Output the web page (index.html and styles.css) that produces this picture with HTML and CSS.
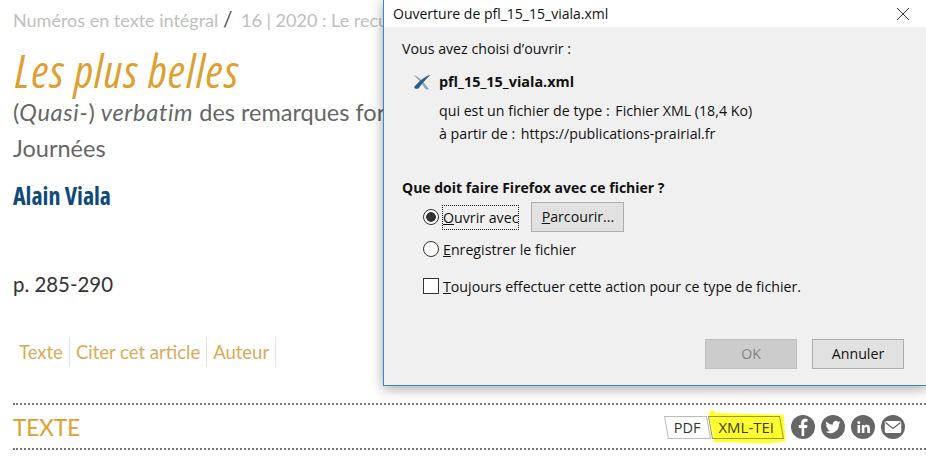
FILE: index.html
```html
<!DOCTYPE html>
<html lang="fr">
  <head>
    <meta charset="UTF-8" />
    <meta name="viewport" content="width=device-width, initial-scale=1.0" />
    <title>Les plus belles</title>
    <link rel="stylesheet" href="styles.css">
  </head>
  <body>
    <div class="page">
      <p class="crumbs">Numéros en texte intégral <span class="sep">/</span> 16 | 2020 : Le recueil</p>
      <h1 class="title">Les plus belles</h1>
      <p class="subtitle">(<em>Quasi-</em>) <em>verbatim</em> des remarques formulées lors des<br>Journées</p>
      <p class="author">Alain Viala</p>
      <p class="pages">p. 285-290</p>
      <ul class="tabs">
        <li>Texte</li>
        <li>Citer cet article</li>
        <li>Auteur</li>
      </ul>
      <div class="section-bar">
        <h2 class="section-title">TEXTE</h2>
        <div class="tools">
          <span class="tag">PDF</span>
          <span class="tag tag-marked">
            <svg class="marker" viewBox="0 0 76 34" preserveAspectRatio="none"><path d="M1 4C2 0 6 0 8 3c20 1 45 1 66 2l2 26c-10 2-22 3-34 2-12 0-27-1-36-1L1 4z"/></svg>
            XML-TEI
          </span>
          <svg class="social" viewBox="0 0 24 24"><circle cx="12" cy="12" r="12"/><path class="glyph" d="M13.200 21v-8h2.800l.4-3.100h-3.200V8.200c0-.9.3-1.500 1.500-1.500h1.800V3.900c-.4 0-1.300-.1-2.400-.1-2.400 0-4 1.400-4 4.100v2H7.800V13h2.800v8z"/></svg>
          <svg class="social" viewBox="0 0 24 24"><circle cx="12" cy="12" r="12"/><path class="glyph" d="M19.500 7.300c-.6.300-1.200.4-1.800.5.600-.4 1.100-1 1.400-1.700-.6.400-1.300.6-2 .8a3.100 3.100 0 0 0-5.300 2.800C9.200 9.600 6.900 8.400 5.400 6.500c-.8 1.400-.4 3.200 1 4.100-.5 0-1-.1-1.400-.4 0 1.500 1.100 2.800 2.500 3.100-.5.100-.9.100-1.400 0 .4 1.200 1.500 2.100 2.900 2.200A6.300 6.300 0 0 1 4.500 16.800a8.800 8.800 0 0 0 13.500-7.800c.6-.4 1.100-1 1.500-1.700z"/></svg>
          <svg class="social" viewBox="0 0 24 24"><circle cx="12" cy="12" r="12"/><path class="glyph" d="M6.500 10h2.600v8H6.500zM7.800 6a1.500 1.500 0 1 1 0 3 1.500 1.500 0 0 1 0-3zM10.800 10h2.500v1.100c.4-.7 1.300-1.300 2.500-1.300 2.600 0 3.100 1.700 3.100 3.900V18h-2.600v-3.800c0-1 0-2.200-1.300-2.200s-1.600 1-1.600 2.100V18h-2.600z"/></svg>
          <svg class="social" viewBox="0 0 24 24"><circle cx="12" cy="12" r="12"/><rect class="glyph" x="3.800" y="6" width="16.400" height="12" rx="1.500"/><path class="flap" d="M4.500 7.500l7.500 6 7.500-6"/></svg>
        </div>
      </div>
    </div>

    <div class="dialog">
      <div class="dialog-title">
        <span>Ouverture de pfl_15_15_viala.xml</span>
        <svg class="close" viewBox="0 0 14 14"><path d="M1 1l12 12M13 1L1 13"/></svg>
      </div>
      <div class="dialog-body">
        <p class="intro">Vous avez choisi d’ouvrir :</p>
        <div class="file">
          <svg class="file-icon" viewBox="0 0 18 16"><path class="x-back" d="M1 1.500C5 2 9 6 16 15c-2 1-3 .5-4-.5C9 10 6 6 1 1.500z"/><path class="x-front" d="M17.500 1C15 1 9 4 1 13c1 2 3 2.500 5 1 2-3 7-9 11.500-13z"/></svg>
          <span>pfl_15_15_viala.xml</span>
        </div>
        <p class="file-meta">qui est un fichier de type : <span class="meta-value">Fichier XML (18,4 Ko)</span></p>
        <p class="file-meta file-from">à partir de : <span class="meta-value">https://publications-prairial.fr</span></p>
        <p class="question">Que doit faire Firefox avec ce fichier ?</p>
        <div class="options">
          <div class="option option-open">
            <span class="radio radio-on"></span>
            <span class="focused"><u>O</u>uvrir avec</span>
            <span class="btn btn-browse"><u>P</u>arcourir...</span>
          </div>
          <div class="option option-save">
            <span class="radio"></span>
            <span><u>E</u>nregistrer le fichier</span>
          </div>
          <div class="option option-always">
            <span class="check"></span>
            <span><u>T</u>oujours effectuer cette action pour ce type de fichier.</span>
          </div>
        </div>
        <div class="actions">
          <span class="btn btn-off">OK</span>
          <span class="btn">Annuler</span>
        </div>
      </div>
    </div>
  </body>
</html>
```

FILE: styles.css
```css
html, body {
  margin: 0;
  height: 463px;
  overflow: hidden;
  background: #fff;
}
body {
  position: relative;
  font-family: Lato, "Open Sans", sans-serif;
}
p, h1, h2, ul {
  margin: 0;
  padding: 0;
}
.page {
  padding: 9px 0 0 13px;
  white-space: nowrap;
}
.crumbs {
  width: 370px;
  overflow: hidden;
  font-size: 18px;
  line-height: 20px;
  color: #c0c0c0;
}
.sep {
  margin-right: 4px;
  color: #555;
  font-size: 21px;
}
.title {
  margin-top: 18px;
  font-family: "Open Sans", sans-serif;
  font-size: 45px;
  line-height: 46px;
  font-weight: 400;
  font-stretch: 75%;
  font-style: italic;
  letter-spacing: 1.400px;
  color: #dfa032;
  padding-left: 2px;
}
.subtitle {
  width: 370px;
  overflow: hidden;
  font-size: 23.500px;
  line-height: 36px;
  color: #666;
}
.subtitle em {
  letter-spacing: 0.7px;
}
.author {
  margin-top: 16px;
  font-family: "Open Sans", sans-serif;
  font-size: 24px;
  line-height: 28px;
  font-weight: 700;
  font-stretch: 75%;
  color: #0f4a7c;
}
.pages {
  margin-top: 61px;
  font-size: 20.400px;
  line-height: 26px;
  color: #333;
}
.tabs {
  display: flex;
  margin-top: 40px;
  list-style: none;
  font-size: 18.500px;
  line-height: 30px;
  color: #d9ab57;
}
.tabs li {
  padding: 0 6px;
  border-right: 1px solid #e3e3e3;
}
.section-bar {
  display: flex;
  justify-content: space-between;
  align-items: center;
  height: 42px;
  padding-top: 1px;
  margin-top: 36px;
  border-top: 2px dotted #777;
  border-bottom: 2px dotted #777;
}
.section-title {
  font-size: 22.500px;
  font-weight: 400;
  color: #dfa032;
}
.tools {
  display: flex;
  align-items: center;
  gap: 6px;
  padding-right: 21px;
}
.tag {
  position: relative;
  z-index: 0;
  padding: 0 8px;
  font-family: "Open Sans", sans-serif;
  font-size: 14.500px;
  line-height: 23px;
  color: #333;
}
.tag::before {
  content: "";
  position: absolute;
  inset: 0;
  z-index: -1;
  border: 1px solid #bbb;
  transform: skewX(10deg);
}
.tag-marked {
  margin-left: -4px;
  margin-right: 3px;
  font-size: 15px;
  color: #3a3a10;
}
.tag-marked::before {
  border-color: #9a9a30;
}
.marker {
  position: absolute;
  left: -2px;
  right: -4px;
  top: -6px;
  z-index: -2;
  width: calc(100% + 6px);
  height: 34px;
  fill: #ffff2e;
}
.social {
  width: 24px;
  height: 24px;
  fill: #666;
}
.social .glyph {
  fill: #fff;
}
.social .flap {
  fill: none;
  stroke: #666;
  stroke-width: 1.300;
}
.dialog {
  position: absolute;
  top: -1px;
  left: 383px;
  right: -1px;
  height: 385px;
  border: 1px solid #3a85c9;
  box-shadow: 0 3px 12px rgba(0, 0, 0, 0.35);
  font-family: "Open Sans", sans-serif;
  font-size: 14.200px;
  color: #111;
  background: #f0f0f0;
}
.dialog-title {
  display: flex;
  justify-content: space-between;
  align-items: center;
  height: 27px;
  padding: 0 16px 0 9px;
  background: #fff;
  font-size: 14px;
}
.close {
  width: 14px;
  height: 14px;
  fill: none;
  stroke: #333;
  stroke-width: 1;
}
.dialog-body {
  padding: 13px 22px 0 18px;
}
.intro {
  line-height: 18px;
}
.file {
  display: flex;
  align-items: center;
  gap: 8px;
  margin-top: 15px;
  padding-left: 11px;
  font-weight: 700;
  font-size: 14.400px;
  line-height: 18px;
}
.file-icon {
  width: 18px;
  height: 16px;
}
.x-back {
  fill: #8fa9bd;
}
.x-front {
  fill: #2f5f86;
}
.file-meta {
  margin-top: 11px;
  padding-left: 37px;
  line-height: 18px;
}
.meta-value {
  margin-left: 2px;
}
.file-from {
  margin-top: 5px;
}
.question {
  margin-top: 36px;
  font-weight: 700;
  font-size: 14px;
  line-height: 18px;
}
.options {
  padding-left: 21px;
}
.option {
  display: flex;
  align-items: center;
}
.option-open {
  margin-top: 5px;
  height: 30px;
}
.option-save {
  margin-top: 2px;
  height: 30px;
}
.option-always {
  margin-top: 7px;
  height: 30px;
}
.radio {
  flex: none;
  box-sizing: border-box;
  width: 16px;
  height: 16px;
  margin-right: 4px;
  border: 1px solid #333;
  border-radius: 50%;
  background: #fff;
}
.radio-on {
  background: radial-gradient(circle, #333 0 4.500px, #fff 5.200px);
}
.focused {
  padding: 2px 0;
  outline: 1px dotted #222;
}
.check {
  flex: none;
  box-sizing: border-box;
  width: 16px;
  height: 16px;
  margin-right: 4px;
  border: 1px solid #333;
  background: #fff;
}
.btn {
  box-sizing: border-box;
  display: flex;
  align-items: center;
  justify-content: center;
  width: 92px;
  height: 30px;
  padding-bottom: 2px;
  border: 1px solid #adadad;
  background: #e1e1e1;
}
.btn-browse {
  margin-left: 13px;
  width: 93px;
}
.btn-off {
  background: #ccc;
  border-color: #bfbfbf;
  color: #838383;
}
.actions {
  display: flex;
  justify-content: flex-end;
  gap: 15px;
  margin-top: 38px;
}
```
